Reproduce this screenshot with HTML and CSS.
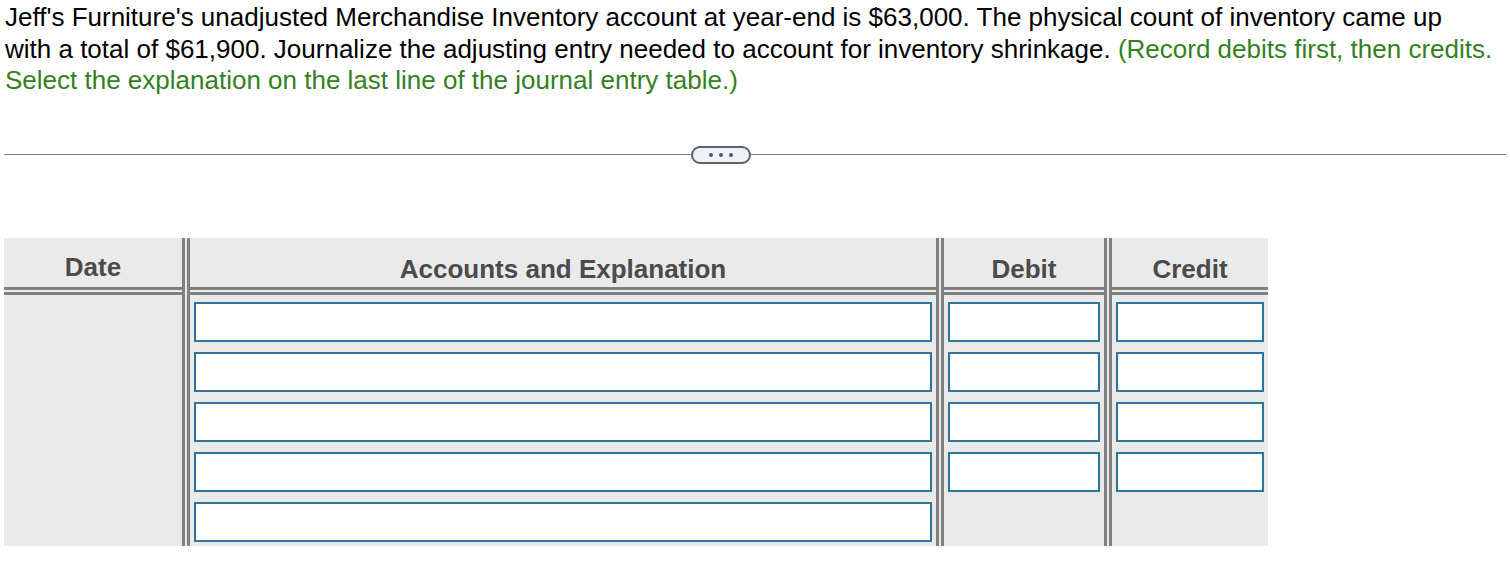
FILE: index.html
```html
<!DOCTYPE html>
<html>
<head>
<meta charset="utf-8">
<link rel="stylesheet" href="styles.css">
</head>
<body>
<div class="page">
  <p class="question">Jeff's Furniture's unadjusted Merchandise Inventory account at year-end is $63,000. The physical count of inventory came up<br>with a total of $61,900. Journalize the adjusting entry needed to account for inventory shrinkage. <span class="hint">(Record debits first, then credits.<br>Select the explanation on the last line of the journal entry table.)</span></p>
  <div class="divider">
    <span class="line line-left"></span>
    <button class="more" type="button"><i></i><i></i><i></i></button>
    <span class="line"></span>
  </div>
  <div class="journal">
    <div class="col col-date">
      <div class="head head-date">Date</div>
      <div class="body"></div>
    </div>
    <div class="col col-acct">
      <div class="head">Accounts and Explanation</div>
      <div class="body">
        <div class="field"></div>
        <div class="field"></div>
        <div class="field"></div>
        <div class="field"></div>
        <div class="field"></div>
      </div>
    </div>
    <div class="col col-debit">
      <div class="head">Debit</div>
      <div class="body">
        <div class="field"></div>
        <div class="field"></div>
        <div class="field"></div>
        <div class="field"></div>
      </div>
    </div>
    <div class="col col-credit">
      <div class="head">Credit</div>
      <div class="body">
        <div class="field"></div>
        <div class="field"></div>
        <div class="field"></div>
        <div class="field"></div>
      </div>
    </div>
  </div>
</div>
</body>
</html>
```
FILE: styles.css
```css
html, body {
  margin: 0;
  padding: 0;
  background: #ffffff;
}
body {
  font-family: "Liberation Sans", Arial, sans-serif;
  color: #000000;
}
.page {
  padding: 0 4px;
}
.question {
  margin: 0;
  padding: 2px 0 0 1px;
  font-size: 26px;
  line-height: 31.5px;
  white-space: nowrap;
}
.hint {
  color: #34801f;
}
.divider {
  display: flex;
  align-items: center;
  margin-top: 49px;
  height: 18px;
}
.divider .line {
  flex: 1;
  height: 1px;
  background: #7b828e;
}
.divider .line-left {
  flex: 0 0 687px;
}
.more {
  flex: 0 0 60px;
  width: 60px;
  height: 18px;
  margin: 0;
  padding: 0;
  border: 2px solid #5b6270;
  border-radius: 9px;
  background: #eef1f5;
  display: flex;
  align-items: center;
  justify-content: center;
  gap: 6px;
}
.more i {
  width: 4px;
  height: 4px;
  border-radius: 50%;
  background: #4d5461;
}
.journal {
  display: flex;
  margin-top: 74px;
  width: 1264px;
  background: #eaeaea;
}
.col {
  display: flex;
  flex-direction: column;
}
.col + .col {
  border-left: 8px double #808080;
}
.col-date { width: 178px; }
.col-acct { width: 746px; }
.col-debit { width: 160px; }
.col-credit { width: 156px; }
.head {
  height: 57px;
  border-bottom: 8px double #808080;
  display: flex;
  align-items: center;
  justify-content: center;
  font-weight: bold;
  font-size: 26px;
  color: #4b4b4b;
  padding-top: 14px;
  box-sizing: border-box;
}
.head-date {
  padding-top: 10px;
}
.body {
  display: flex;
  flex-direction: column;
  gap: 10px;
  padding: 7px 4px 4px;
  height: 251px;
  box-sizing: border-box;
}
.field {
  height: 40px;
  box-sizing: border-box;
  border: 2px solid #2f7599;
  background: #ffffff;
}
```
